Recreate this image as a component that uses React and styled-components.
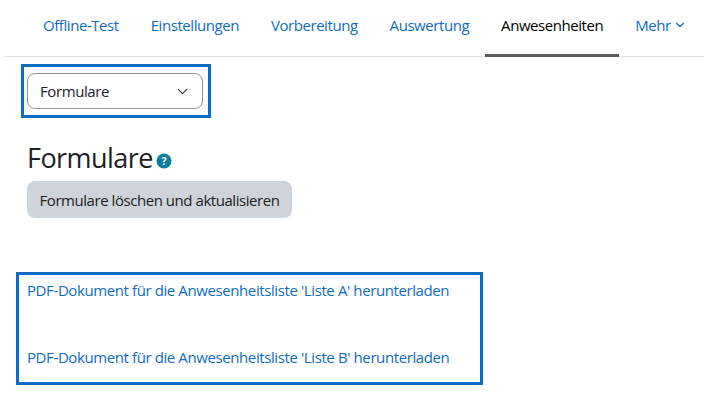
import React from 'react';
import styled, { createGlobalStyle } from 'styled-components';
import { ChevronDown } from 'lucide-react';

const GlobalStyle = createGlobalStyle`
    html, body {
        margin: 0;
        background: #fff;
    }
    body {
        font-family: "Open Sans", "Noto Sans", "Liberation Sans", sans-serif;
        font-size: 15px;
        letter-spacing: -0.4px;
        color: #1d2125;
    }
`;

const Page = styled.div`
    width: 704px;
    height: 410px;
    overflow: hidden;
    padding-left: 4px;
    box-sizing: border-box;
`;

const Tabs = styled.nav`
    display: flex;
    height: 57px;
    padding-left: 23px;
    border-bottom: 1px solid #dee2e6;
    box-sizing: border-box;
`;

const Tab = styled.a`
    display: flex;
    align-items: center;
    gap: 2px;
    padding: 0 16px 4px;
    height: 57px;
    box-sizing: border-box;
    letter-spacing: -0.44px;
    color: ${(p) => (p.$active ? '#000' : '#0f6cbf')};
    border-bottom: 3px solid ${(p) => (p.$active ? '#5c5c5c' : 'transparent')};
    white-space: nowrap;
`;

const Content = styled.div`
    display: flex;
    flex-direction: column;
    align-items: flex-start;
`;

const SelectOutline = styled.div`
    margin: 7px 0 0 17px;
    padding: 0 5px 0 3px;
    width: 190px;
    height: 54px;
    box-sizing: border-box;
    border: 3px solid #0f6cc4;
    display: flex;
    align-items: center;
`;

const Select = styled.div`
    width: 100%;
    height: 36px;
    box-sizing: border-box;
    padding: 0 11px 0 12px;
    display: flex;
    align-items: center;
    justify-content: space-between;
    border: 1px solid #8f959e;
    border-radius: 8px;
`;

const HeadingRow = styled.div`
    display: flex;
    align-items: center;
    margin: 20px 0 0 23px;
    height: 40px;
`;

const Heading = styled.h2`
    margin: 0;
    font-size: 27px;
    font-weight: 400;
    line-height: 40px;
    letter-spacing: -0.55px;
`;

const HelpIcon = styled.svg`
    width: 16px;
    height: 16px;
    margin: 5px 0 0 3px;
`;

const Button = styled.button`
    margin: 3px 0 0 23px;
    width: 265px;
    height: 37px;
    padding: 0;
    border: none;
    border-radius: 8px;
    background: #ced4da;
    color: #1d2125;
    font: inherit;
    letter-spacing: -0.45px;
`;

const LinkBox = styled.div`
    margin: 54px 0 0 12px;
    width: 467px;
    height: 113px;
    box-sizing: border-box;
    border: 3px solid #0f6cc4;
    padding: 0 8px;
    display: flex;
    flex-direction: column;
`;

const DocLink = styled.a`
    color: #0f6cbf;
    line-height: 20px;
    margin-top: ${(p) => (p.$first ? '5px' : '47px')};
    white-space: nowrap;
`;

const tabs = ['Offline-Test', 'Einstellungen', 'Vorbereitung', 'Auswertung', 'Anwesenheiten'];

export default function App() {
    return (
        <Page>
            <GlobalStyle />
            <Tabs>
                {tabs.map((t) => (
                    <Tab key={t} $active={t === 'Anwesenheiten'}>{t}</Tab>
                ))}
                <Tab>
                    Mehr
                    <ChevronDown size={14} strokeWidth={2} />
                </Tab>
            </Tabs>
            <Content>
                <SelectOutline>
                    <Select>
                        Formulare
                        <ChevronDown size={17} strokeWidth={1.8} color="#343a40" />
                    </Select>
                </SelectOutline>
                <HeadingRow>
                    <Heading>Formulare</Heading>
                    <HelpIcon viewBox="0 0 16 16">
                        <circle cx="8" cy="8" r="7.5" fill="#0f7f9c" />
                        <text x="8" y="11.5" textAnchor="middle" fontSize="10" fontWeight="700" fill="#fff">?</text>
                    </HelpIcon>
                </HeadingRow>
                <Button>Formulare löschen und aktualisieren</Button>
                <LinkBox>
                    <DocLink $first>PDF-Dokument für die Anwesenheitsliste 'Liste A' herunterladen</DocLink>
                    <DocLink>PDF-Dokument für die Anwesenheitsliste 'Liste B' herunterladen</DocLink>
                </LinkBox>
            </Content>
        </Page>
    );
}
